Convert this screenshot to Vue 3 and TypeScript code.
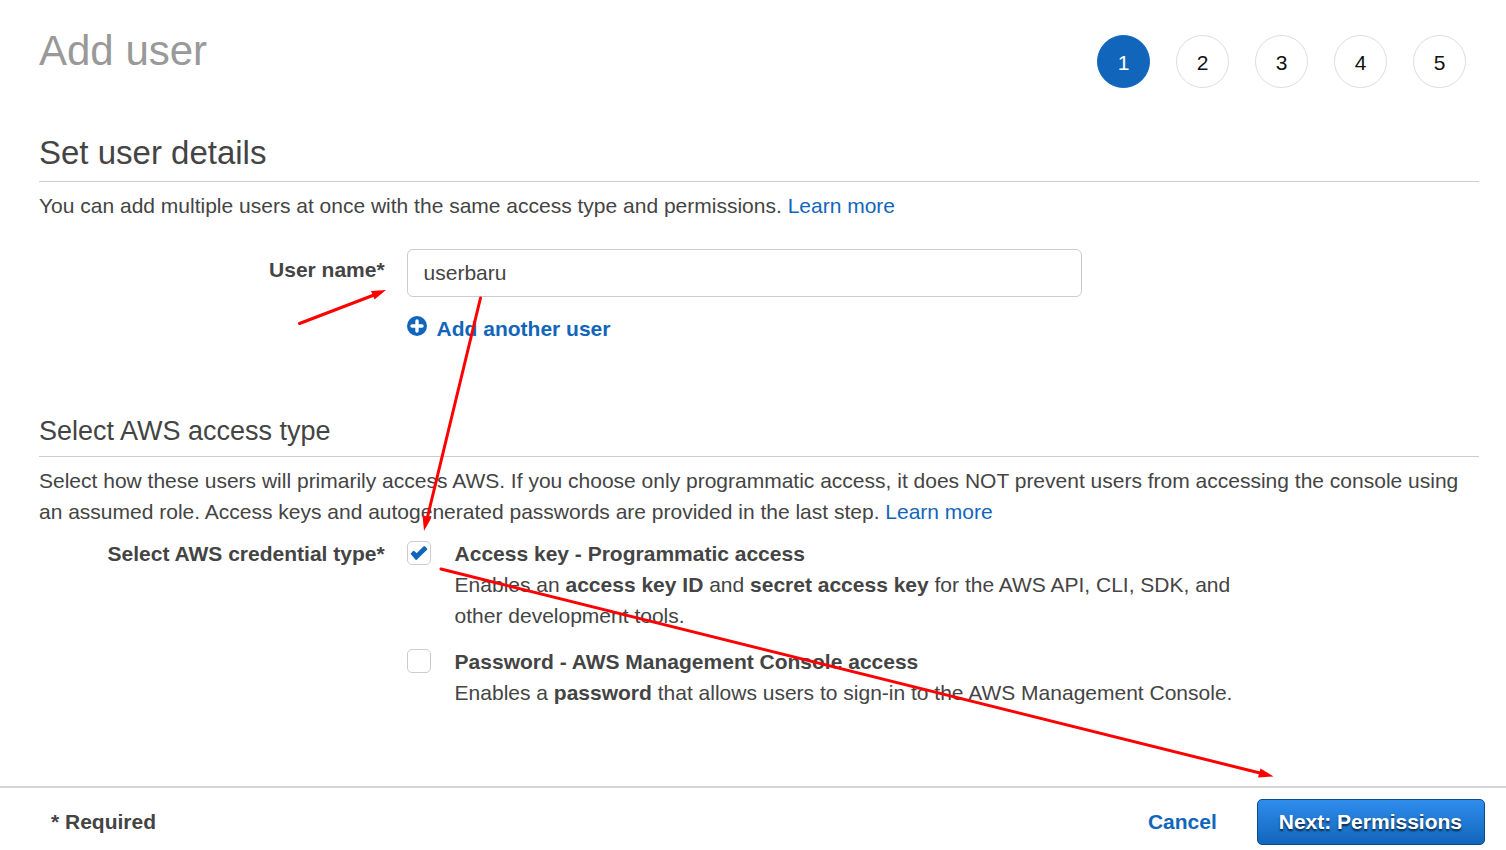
<script setup lang="ts">
import { ref } from 'vue'

const steps: number[] = [1, 2, 3, 4, 5]
const currentStep = ref<number>(1)
const userName = ref<string>('userbaru')
const programmatic = ref<boolean>(true)
const consoleAccess = ref<boolean>(false)
const tickPath = 'M4.500 12.700L6.700 10.500L9.600 13.200L17.200 5.800L19.500 8.100L9.200 18.200Z'
</script>

<template>
  <div class="page">
    <main class="content">
      <header class="top">
        <h1>Add user</h1>
        <ol class="steps">
          <li v-for="step in steps" :key="step" :class="{ active: step === currentStep }">{{ step }}</li>
        </ol>
      </header>

      <section class="details">
        <h2>Set user details</h2>
        <p>You can add multiple users at once with the same access type and permissions. <a href="#">Learn more</a></p>
        <div class="form-row name-row">
          <label class="row-label" for="user-name">User name*</label>
          <div class="field">
            <input id="user-name" v-model="userName" class="text-box" type="text" />
            <button class="add" type="button">
              <svg width="20" height="20" viewBox="0 0 20 20" aria-hidden="true">
                <circle cx="10" cy="10" r="10" fill="#1166bb" />
                <path d="M10 5v10M5 10h10" stroke="#fff" stroke-width="3.4" stroke-linecap="round" />
              </svg>
              <span>Add another user</span>
            </button>
          </div>
        </div>
      </section>

      <section class="access">
        <h3>Select AWS access type</h3>
        <p>
          Select how these users will primarily access AWS. If you choose only programmatic access, it does NOT prevent
          users from accessing the console using an assumed role. Access keys and autogenerated passwords are provided in
          the last step. <a href="#">Learn more</a>
        </p>
        <div class="form-row" role="group" aria-labelledby="credential-label">
          <span id="credential-label" class="row-label">Select AWS credential type*</span>
          <div class="options">
            <div class="option">
              <span class="tick">
                <input id="programmatic" v-model="programmatic" type="checkbox" />
                <svg v-if="programmatic" width="24" height="24" viewBox="0 0 24 24" aria-hidden="true">
                  <path :d="tickPath" />
                </svg>
              </span>
              <div>
                <label for="programmatic">Access key - Programmatic access</label>
                <div>
                  Enables an <b>access key ID</b> and <b>secret access key</b> for the AWS API, CLI, SDK, and other
                  development tools.
                </div>
              </div>
            </div>
            <div class="option">
              <span class="tick">
                <input id="console" v-model="consoleAccess" type="checkbox" />
                <svg v-if="consoleAccess" width="24" height="24" viewBox="0 0 24 24" aria-hidden="true">
                  <path :d="tickPath" />
                </svg>
              </span>
              <div>
                <label for="console">Password - AWS Management Console access</label>
                <div>Enables a <b>password</b> that allows users to sign-in to the AWS Management Console.</div>
              </div>
            </div>
          </div>
        </div>
      </section>
    </main>

    <footer class="bar">
      <strong>* Required</strong>
      <div class="actions">
        <button class="cancel" type="button">Cancel</button>
        <button class="next" type="button">Next: Permissions</button>
      </div>
    </footer>

    <svg class="arrows" width="1506" height="850" viewBox="0 0 1506 850" aria-hidden="true">
      <g stroke="#ff0000" stroke-width="3" stroke-linecap="round" fill="#ff0000">
        <path d="M299.500 323.500L374 295M480.500 298L427.500 517M441 569L1260 773" />
        <path stroke="none" d="M386 290L371 291L374.500 299.500ZM424 531L422.500 515.500L431.500 517.500ZM1273.500 776.500L1260.500 768.500L1258 777.500Z" />
      </g>
    </svg>
  </div>
</template>

<style>
body {
  margin: 0;
  background: #fff;
}
</style>

<style scoped>
.page {
  position: relative;
  box-sizing: border-box;
  display: flex;
  flex-direction: column;
  min-height: 100vh;
  overflow: hidden;
  color: #444;
  font: 21px/31px "Liberation Sans", Arial, sans-serif;
}

.content {
  flex: 1;
  padding: 35px 27px 24px 39px;
}

.top {
  display: flex;
  justify-content: space-between;
  align-items: flex-start;
}

h1,
h2,
h3,
p {
  margin: 0;
  font-weight: 400;
}

h1 {
  color: #999;
  font-size: 42px;
  line-height: 32px;
}

h2 {
  margin-top: 46px;
  padding-bottom: 9px;
  border-bottom: 1px solid #ccc;
  font-size: 33px;
  line-height: 38px;
}

h3 {
  margin-top: 70px;
  padding-bottom: 8px;
  border-bottom: 1px solid #ccc;
  font-size: 27px;
  line-height: 34px;
}

p {
  margin-top: 8px;
}

a {
  color: #1166bb;
  text-decoration: none;
}

.steps {
  display: flex;
  gap: 26px;
  margin: 0;
  padding: 0 13px 0 0;
  list-style: none;
}

.steps li {
  box-sizing: border-box;
  width: 53px;
  height: 53px;
  border: 1px solid #ddd;
  border-radius: 50%;
  color: #111;
  line-height: 53px;
  text-align: center;
}

.steps li.active {
  border-color: #1166bb;
  background: #1166bb;
  color: #fff;
}

.form-row {
  display: grid;
  grid-template-columns: 24% minmax(0, 1fr);
  column-gap: 22px;
  margin-top: 11px;
}

.name-row {
  margin-top: 28px;
}

.row-label {
  font-weight: 700;
  text-align: right;
}

.name-row .row-label {
  padding-top: 5px;
}

.text-box {
  display: block;
  box-sizing: border-box;
  width: 63%;
  height: 48px;
  padding: 0 16px;
  border: 1px solid #ccc;
  border-radius: 6px;
  background: #fff;
  color: #444;
  font: inherit;
  outline: none;
}

button {
  padding: 0;
  border: 0;
  background: none;
  color: #1166bb;
  font: inherit;
  font-weight: 700;
  cursor: pointer;
}

.add {
  display: flex;
  gap: 10px;
  margin-top: 16px;
}

.add svg {
  margin-top: 3px;
}

.options {
  display: grid;
  gap: 15px;
}

.option {
  display: grid;
  grid-template-columns: 24px minmax(0, 800px);
  gap: 24px;
}

.option label,
b {
  font-weight: 700;
}

.tick {
  position: relative;
  height: 24px;
  margin-top: 3px;
}

.tick input {
  display: block;
  box-sizing: border-box;
  width: 24px;
  height: 24px;
  margin: 0;
  border: 1px solid #ccc;
  border-radius: 5px;
  background: #fff;
  appearance: none;
}

.tick svg {
  position: absolute;
  inset: 0;
  fill: #1166bb;
  stroke: #1166bb;
  stroke-width: 1.6;
  stroke-linejoin: round;
  pointer-events: none;
}

.bar {
  display: flex;
  justify-content: space-between;
  align-items: center;
  box-sizing: border-box;
  height: 64px;
  padding: 5px 21px 0 51px;
  border-top: 2px solid #d5d5d5;
}

.actions {
  display: flex;
  align-items: center;
  gap: 40px;
}

.next {
  height: 46px;
  padding: 0 22px 0 21px;
  border: 1px solid #0f4a87;
  border-radius: 5px;
  background: linear-gradient(#2f8ded, #1166bb);
  color: #fff;
  text-shadow: 0 2px 2px rgba(0, 0, 0, 0.7);
}

.arrows {
  position: absolute;
  top: 0;
  left: 0;
  pointer-events: none;
}
</style>
